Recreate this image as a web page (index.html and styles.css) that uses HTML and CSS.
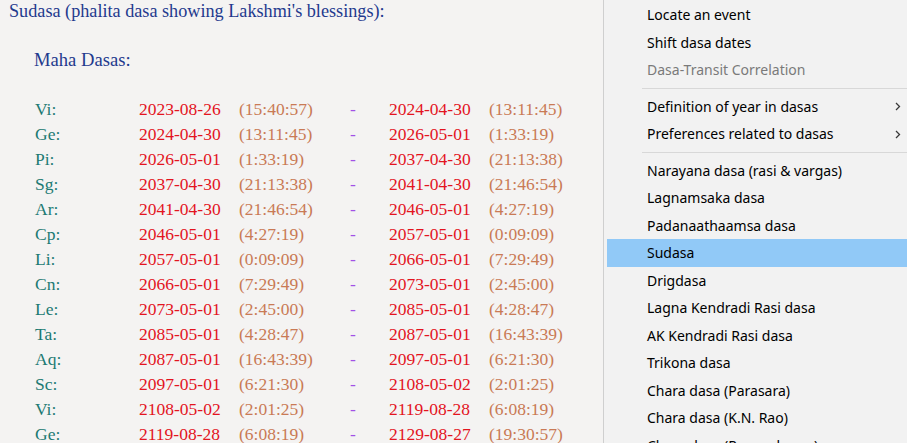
FILE: index.html
```html
<!DOCTYPE html>
<html>
<head>
<meta charset="utf-8">
<link rel="stylesheet" href="styles.css">
</head>
<body>
<div class="screen">
  <div class="report">
    <div class="title">Sudasa (phalita dasa showing Lakshmi's blessings):</div>
    <div class="subtitle">Maha Dasas:</div>
    <div class="table">
      <span class="sign">Vi:</span><span class="date">2023-08-26</span><span class="time">(15:40:57)</span><span class="dash">-</span><span class="date">2024-04-30</span><span class="time">(13:11:45)</span>
      <span class="sign">Ge:</span><span class="date">2024-04-30</span><span class="time">(13:11:45)</span><span class="dash">-</span><span class="date">2026-05-01</span><span class="time">(1:33:19)</span>
      <span class="sign">Pi:</span><span class="date">2026-05-01</span><span class="time">(1:33:19)</span><span class="dash">-</span><span class="date">2037-04-30</span><span class="time">(21:13:38)</span>
      <span class="sign">Sg:</span><span class="date">2037-04-30</span><span class="time">(21:13:38)</span><span class="dash">-</span><span class="date">2041-04-30</span><span class="time">(21:46:54)</span>
      <span class="sign">Ar:</span><span class="date">2041-04-30</span><span class="time">(21:46:54)</span><span class="dash">-</span><span class="date">2046-05-01</span><span class="time">(4:27:19)</span>
      <span class="sign">Cp:</span><span class="date">2046-05-01</span><span class="time">(4:27:19)</span><span class="dash">-</span><span class="date">2057-05-01</span><span class="time">(0:09:09)</span>
      <span class="sign">Li:</span><span class="date">2057-05-01</span><span class="time">(0:09:09)</span><span class="dash">-</span><span class="date">2066-05-01</span><span class="time">(7:29:49)</span>
      <span class="sign">Cn:</span><span class="date">2066-05-01</span><span class="time">(7:29:49)</span><span class="dash">-</span><span class="date">2073-05-01</span><span class="time">(2:45:00)</span>
      <span class="sign">Le:</span><span class="date">2073-05-01</span><span class="time">(2:45:00)</span><span class="dash">-</span><span class="date">2085-05-01</span><span class="time">(4:28:47)</span>
      <span class="sign">Ta:</span><span class="date">2085-05-01</span><span class="time">(4:28:47)</span><span class="dash">-</span><span class="date">2087-05-01</span><span class="time">(16:43:39)</span>
      <span class="sign">Aq:</span><span class="date">2087-05-01</span><span class="time">(16:43:39)</span><span class="dash">-</span><span class="date">2097-05-01</span><span class="time">(6:21:30)</span>
      <span class="sign">Sc:</span><span class="date">2097-05-01</span><span class="time">(6:21:30)</span><span class="dash">-</span><span class="date">2108-05-02</span><span class="time">(2:01:25)</span>
      <span class="sign">Vi:</span><span class="date">2108-05-02</span><span class="time">(2:01:25)</span><span class="dash">-</span><span class="date">2119-08-28</span><span class="time">(6:08:19)</span>
      <span class="sign">Ge:</span><span class="date">2119-08-28</span><span class="time">(6:08:19)</span><span class="dash">-</span><span class="date">2129-08-27</span><span class="time">(19:30:57)</span>
    </div>
  </div>
  <div class="menu">
    <div class="item">Locate an event</div>
    <div class="item">Shift dasa dates</div>
    <div class="item disabled">Dasa-Transit Correlation</div>
    <div class="sep"></div>
    <div class="item sub">Definition of year in dasas<svg class="arrow" width="6" height="9" viewBox="0 0 6 9"><path d="M1 1 L4.5 4.5 L1 8" fill="none" stroke="#3a3a3a" stroke-width="1.3"/></svg></div>
    <div class="item sub">Preferences related to dasas<svg class="arrow" width="6" height="9" viewBox="0 0 6 9"><path d="M1 1 L4.5 4.5 L1 8" fill="none" stroke="#3a3a3a" stroke-width="1.3"/></svg></div>
    <div class="sep"></div>
    <div class="item">Narayana dasa (rasi &amp; vargas)</div>
    <div class="item">Lagnamsaka dasa</div>
    <div class="item">Padanaathaamsa dasa</div>
    <div class="item active">Sudasa</div>
    <div class="item">Drigdasa</div>
    <div class="item">Lagna Kendradi Rasi dasa</div>
    <div class="item">AK Kendradi Rasi dasa</div>
    <div class="item">Trikona dasa</div>
    <div class="item">Chara dasa (Parasara)</div>
    <div class="item">Chara dasa (K.N. Rao)</div>
    <div class="item">Chara dasa (Rangacharya)</div>
  </div>
</div>
</body>
</html>
```
FILE: styles.css
```css
html, body {
  margin: 0;
  padding: 0;
  width: 907px;
  height: 443px;
  overflow: hidden;
  background: #f4f3f2;
}
.screen {
  display: flex;
  height: 443px;
  overflow: hidden;
}
.report {
  width: 603px;
  flex: none;
  font-family: "Liberation Serif", "Times New Roman", serif;
  font-size: 17.5px;
  line-height: 25px;
  color: #1f3a8e;
}
.title {
  padding-left: 9px;
  margin-top: -1px;
  font-size: 18.2px;
}
.subtitle {
  padding-left: 34px;
  margin-top: 23px;
  font-size: 18.6px;
}
.table {
  display: grid;
  grid-template-columns: 104px 100px 111px 39px 100px auto;
  padding-left: 35px;
  margin-top: 24px;
  padding-top: 1px;
}
.sign { color: #1c7a73; }
.date { color: #e3141e; }
.time { color: #c97a55; }
.dash { color: #a251e6; }
.menu {
  flex: 1;
  border-left: 1px solid #cfcfcf;
  background: #f2f2f2;
  padding: 1.25px 0 0 3px;
  font-family: "Noto Sans", "Segoe UI", sans-serif;
  font-size: 14px;
  color: #000;
}
.item {
  height: 27.5px;
  line-height: 27.5px;
  padding-left: 40px;
  display: flex;
  align-items: center;
  white-space: nowrap;
}
.item.disabled { color: #7a7a7a; }
.item.active { background: #91c9f7; }
.sep {
  height: 9px;
  margin-left: 35px;
  display: flex;
  align-items: center;
}
.sep::after {
  content: "";
  flex: 1;
  border-top: 1px solid #d8d8d8;
}
.arrow {
  margin-left: auto;
  margin-right: 6px;
}
```
